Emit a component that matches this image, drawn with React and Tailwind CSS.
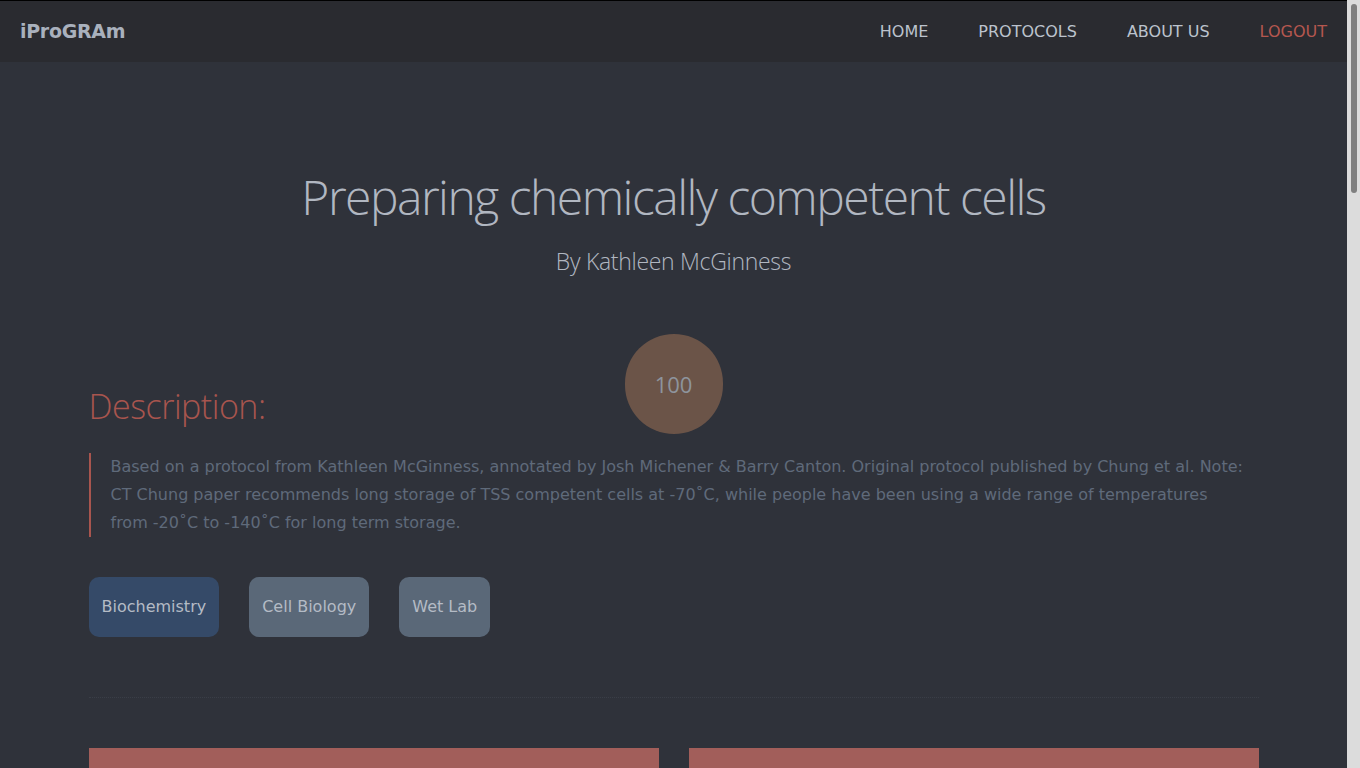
export default function App() {
  const tags = [
    { name: 'Biochemistry', cls: 'bg-[#354a68]' },
    { name: 'Cell Biology', cls: 'bg-[#5a6878]' },
    { name: 'Wet Lab', cls: 'bg-[#5a6878]' },
  ];

  return (
    <div className="h-screen flex overflow-hidden bg-[#2f323a] font-['DejaVu_Sans',sans-serif]">
      <div className="flex-1 min-w-0 overflow-hidden">
        <nav className="h-[62px] bg-[#2a2b30] border-t border-black flex items-center justify-between pl-[20px] pr-[20px]">
          <a className="text-[19px] font-bold text-[#a9b1bd] tracking-[-0.3px]">iProGRAm</a>
          <ul className="flex items-center gap-[50px] text-[16px] text-[#bcc3cd]">
            <li>HOME</li>
            <li>PROTOCOLS</li>
            <li>ABOUT US</li>
            <li className="text-[#b5574f]">LOGOUT</li>
          </ul>
        </nav>

        <main className="w-[1170px] mx-auto">
          <header className="pt-[106px] text-center font-['Open_Sans',sans-serif] font-light text-[#b1b7c1]">
            <h1 className="text-[48px] leading-[58px] tracking-[-1.5px]">Preparing chemically competent cells</h1>
            <p className="mt-[20px] text-[23px] leading-[30px] tracking-[-0.3px]">By Kathleen McGinness</p>
          </header>

          <div className="mt-[58px] mx-auto w-[98px] h-[100px] rounded-full bg-[#6b5448] flex items-center justify-center">
            <span className="text-[22px] text-[#8e949d] font-['Open_Sans',sans-serif]">100</span>
          </div>

          <section className="-mt-[51px]">
            <h2 className="font-['Open_Sans',sans-serif] font-light text-[34px] leading-[46px] text-[#a8554e] tracking-[-0.5px]">Description:</h2>
            <blockquote className="mt-[24px] border-l-[2px] border-[#a8554e] pl-[20px] pr-[12px] text-[16px] leading-[28px] text-[#5f6a7a]">
              Based on a protocol from Kathleen McGinness, annotated by Josh Michener &amp; Barry Canton. Original protocol published by Chung et al. Note: CT Chung paper recommends long storage of TSS competent cells at -70˚C, while people have been using a wide range of temperatures from -20˚C to -140˚C for long term storage.
            </blockquote>

            <div className="mt-[40px] flex gap-[30px]">
              {tags.map((t) => (
                <span
                  key={t.name}
                  className={`${t.cls} h-[60px] px-[13px] rounded-[10px] flex items-center text-[16px] text-[#b4bbc5]`}
                >
                  {t.name}
                </span>
              ))}
            </div>
          </section>

          <hr className="mt-[60px] border-0 border-t border-dotted border-[#3a3e47]" />

          <div className="mt-[50px] grid grid-cols-2 gap-[30px]">
            <div className="h-[400px] bg-[#a25e5a]" />
            <div className="h-[400px] bg-[#a25e5a]" />
          </div>
        </main>
      </div>

      {/* scrollbar */}
      <div className="w-[13px] shrink-0 bg-[#dcdcdc] pt-[4px] pl-[4px] pr-[3px]">
        <div className="h-[189px] rounded-full bg-[#7f7f7f]" />
      </div>
    </div>
  );
}
